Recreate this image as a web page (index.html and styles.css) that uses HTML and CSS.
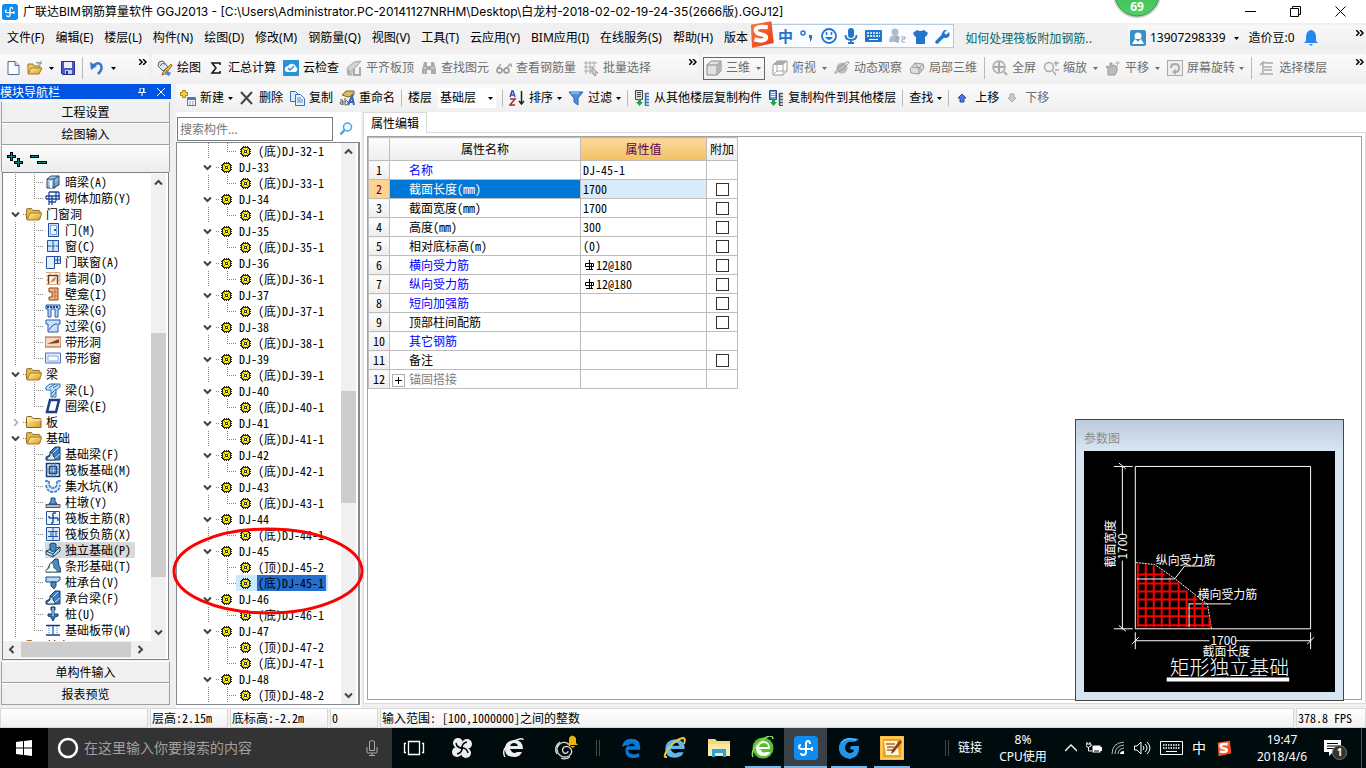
FILE: index.html
```html
<!DOCTYPE html>
<html lang="zh-CN">
<head>
<meta charset="utf-8">
<title>广联达BIM钢筋算量软件 GGJ2013</title>
<link rel="stylesheet" href="styles.css">
</head>
<body>
<svg class="defs" aria-hidden="true">
<defs>
<linearGradient id="gold" x1="0" y1="0" x2="1" y2="1"><stop offset="0" stop-color="#fff2b0"/><stop offset="1" stop-color="#d99a1c"/></linearGradient>
<linearGradient id="steel" x1="0" y1="0" x2="1" y2="1"><stop offset="0" stop-color="#e8f2fb"/><stop offset="1" stop-color="#4a86c0"/></linearGradient>
<linearGradient id="ball" x1="0" y1="0" x2="0" y2="1"><stop offset="0" stop-color="#35b14c"/><stop offset="1" stop-color="#4fd064"/></linearGradient>
<linearGradient id="sogou" x1="0" y1="0" x2="1" y2="1"><stop offset="0" stop-color="#fb7a45"/><stop offset="1" stop-color="#e93a12"/></linearGradient>
</defs>
<symbol id="logo" viewBox="0 0 24 24"><rect width="24" height="24" rx="4" fill="#0d8df2"/><path d="M16 8q0-3-2-3-2 0-2 3v8q0 3-3 3-2 0-2-2M7 9q-2 0-2 2t3 2h10M18 11v4" fill="none" stroke="#fff" stroke-width="2"/></symbol>
<symbol id="caret" viewBox="0 0 5 3"><path d="M0 0h5L2.500 3z" fill="currentColor"/></symbol>
<symbol id="more" viewBox="0 0 8 6"><path d="M0 0l3 3-3 3M4 0l3 3-3 3" fill="none" stroke="#000" stroke-width="1.500"/></symbol>
<symbol id="chev" viewBox="0 0 9 9"><path d="M1 2.500l3.500 3.500L8 2.500" fill="none" stroke="#444" stroke-width="2"/></symbol>
<symbol id="gear" viewBox="0 0 11 11"><path d="M3 0h1v1h1V0h1v1h1V0h1v1h1v1h1v1h1v1h-1v1h1v1h-1v1h1v1h-1v1H9v1H8v1H7v-1H6v1H5v-1H4v1H3v-1H2V9H1V8H0V7h1V6H0V5h1V4H0V3h1V2h1V1h1z" fill="#222"/><path d="M3 2h5v1h1v5H8v1H3V8H2V3h1z" fill="#f8f000"/><path d="M4 4h3v3H4z" fill="#333"/><path d="M5 5h1v1H5z" fill="#fff"/><path d="M3 3h1v1H3zM7 3h1v1H7zM3 7h1v1H3zM7 7h1v1H7z" fill="#8a8600"/></symbol>
<symbol id="folder" viewBox="0 0 16 14"><path d="M.5 12V2.500q0-1 1-1h4l1.500 2h6q1 0 1 1V12z" fill="#e9b94a" stroke="#9b7226"/><path d="M1 13L4 6h12l-3 7z" fill="url(#gold)" stroke="#a67a22"/></symbol>
<symbol id="folderc" viewBox="0 0 16 14"><path d="M.5 12.500v-10q0-1 1-1h4l1.500 2h7q1 0 1 1v8z" fill="url(#gold)" stroke="#8a6520"/><path d="M1 5h14" stroke="#fff4bd"/></symbol>
<!-- toolbar -->
<symbol id="new" viewBox="0 0 16 16"><path d="M3 1.500h7l4 4v9H3z" fill="#fbfdff" stroke="#4f6c94"/><path d="M10 1.500v4h4" fill="#cfe0f5" stroke="#4f6c94"/></symbol>
<symbol id="open" viewBox="0 0 16 16"><path d="M1 13V4h5l1 2h6v2" fill="#f1c95d" stroke="#9c7427"/><path d="M1 14l3-6h11l-3 6z" fill="url(#gold)" stroke="#a67a22"/><path d="M9 3q3-2 5 1m0-3v3h-3" fill="none" stroke="#597"/></symbol>
<symbol id="save" viewBox="0 0 16 16"><path d="M1.500 1.500h13v13h-12l-1-1z" fill="#4a58c8" stroke="#28348c"/><path d="M4 2h8v6H4z" fill="#e8eefc"/><path d="M5 10h7v4H5z" fill="#c9d0ea"/><path d="M6 11h2v3H6z" fill="#28348c"/></symbol>
<symbol id="undo" viewBox="0 0 16 16"><path d="M4 6q5-5 8-1 2 4-3 9" fill="none" stroke="#3f73c8" stroke-width="2.500"/><path d="M1 2l1 8 6-4z" fill="#3f73c8"/></symbol>
<symbol id="paint" viewBox="0 0 16 16"><path d="M2 2l4-1 5 6-5 4-5-5z" fill="#dbe8f4" stroke="#44617f"/><path d="M3 6q2-4 5-2" fill="none" stroke="#44617f"/><path d="M6 12l8-8 1 2-7 8-3 1z" fill="#f1b63c" stroke="#9b6c17"/><path d="M9 10l5 3-2 3-4-2z" fill="#4c8bd0"/></symbol>
<symbol id="cloud" viewBox="0 0 16 16"><rect width="16" height="16" rx="1" fill="#2692d8"/><path d="M4 12q-3-1-2-4 1-2 3-2 2-3 5-2 2 0 3 3 3 2 0 5z" fill="#fff"/><path d="M5 8l2 2 4-4" fill="none" stroke="#2692d8" stroke-width="1.500"/></symbol>
<symbol id="slab" viewBox="0 0 16 16"><path d="M1 8l7-6 7-1-5 6-4 3v5H2z" fill="#d2d2d2" stroke="#aaa"/><path d="M3 10v5M8 9v6h6V7" fill="none" stroke="#aaa" stroke-width="2"/></symbol>
<symbol id="binoc" viewBox="0 0 16 16"><path d="M3 2h3v4h4V2h3l2 8v4h-5v-4H6v4H1v-4z" fill="#aaa"/><path d="M3 8h2M10 8h3M3 12h1" stroke="#eee"/></symbol>
<symbol id="glasses" viewBox="0 0 16 16"><path d="M1 9l4-5M10 9l4-5q2 0 1 3M6 10h2" fill="none" stroke="#aaa" stroke-width="1.500"/><circle cx="3.500" cy="10.500" r="2.500" fill="#eee" stroke="#999" stroke-width="1.500"/><circle cx="10.500" cy="10.500" r="2.500" fill="#eee" stroke="#999" stroke-width="1.500"/></symbol>
<symbol id="batch" viewBox="0 0 16 16"><path d="M1 3h13M1 7h9M1 11h8M3 1v13M7 1v13M11 1v7" stroke="#aaa"/><path d="M9 7l6 6h-3l1 3-2-1-2-2z" fill="#ccc" stroke="#999"/></symbol>
<symbol id="cube" viewBox="0 0 16 16"><path d="M1 5l4-4h10v10l-4 4H1z" fill="#e2e2e2" stroke="#888"/><path d="M1 5h10v10M11 5l4-4" fill="none" stroke="#888"/><path d="M11 5l4-4v10l-4 4z" fill="#b4b4b4"/></symbol>
<symbol id="cubetop" viewBox="0 0 16 16"><path d="M1 5l4-4h10v10l-4 4H1z" fill="#fff" stroke="#999"/><path d="M1 5l4-4h10l-4 4z" fill="#aaa"/><path d="M11 5v10M5 5v6L1 15M5 11h10" fill="none" stroke="#aaa"/></symbol>
<symbol id="orbit" viewBox="0 0 16 16"><circle cx="8" cy="8" r="5.500" fill="#bbb"/><path d="M3 12q-3 3-2 0Q5 5 13 2q3-1 1 2-5 7-11 8" fill="none" stroke="#999"/></symbol>
<symbol id="local" viewBox="0 0 16 16"><path d="M1 9l5-6 8 1 1 4-5 6-8-1z" fill="#ddd" stroke="#999"/><path d="M3 7l8 1 2 3M6 3l4 6v5M10 8l4-4" fill="none" stroke="#999"/></symbol>
<symbol id="full" viewBox="0 0 16 16"><circle cx="7" cy="7" r="6" fill="#f1f1f1" stroke="#aaa" stroke-width="1.500"/><path d="M7 2v10M2 7h10M12 12l3 3" stroke="#aaa" stroke-width="2"/></symbol>
<symbol id="zoomi" viewBox="0 0 16 16"><circle cx="6" cy="7" r="4.500" fill="#f1f1f1" stroke="#aaa" stroke-width="1.500"/><path d="M10 11l3 4M11 3h5M13 1v5M12 10h4" stroke="#aaa" stroke-width="1.500"/></symbol>
<symbol id="hand" viewBox="0 0 16 16"><path d="M3 15V9L1 7l2-1 2 2V3h2v3l2-1 2 1 1 1v4l-2 4z" fill="#bbb" stroke="#999"/><path d="M10 3h5M12.500 1v5" stroke="#bbb"/></symbol>
<symbol id="rotate" viewBox="0 0 16 16"><rect x=".5" y=".5" width="15" height="15" fill="#eee" stroke="#aaa"/><path d="M4 8q0-4 4-4t4 4-4 4" fill="none" stroke="#aaa" stroke-width="2"/><path d="M9 9v6l-4-3z" fill="#aaa"/></symbol>
<symbol id="floors" viewBox="0 0 16 16"><path d="M1 5l3-3 3 1h7M4 3v10M5 7h8M5 10h8M1 14h13" fill="none" stroke="#aaa" stroke-width="1.500"/></symbol>
<symbol id="add" viewBox="0 0 16 16"><path d="M2.500.5h3v2h2v3h-2v2h-3v-2h-2v-3h2z" fill="#f5d348" stroke="#ab8211"/><path d="M7.500 7.500h8v8h-8z" fill="#fff" stroke="#4f79b4"/><path d="M7 9h9" stroke="#4f79b4" stroke-width="2"/><path d="M9 12h2M12 12h2M9 14h2M12 14h2" stroke="#7296c7"/></symbol>
<symbol id="del" viewBox="0 0 16 16"><path d="M2 2l11 12M13 2L2 14" stroke="#444" stroke-width="2"/></symbol>
<symbol id="copy" viewBox="0 0 16 16"><path d="M1.500 1.500h5l3 3v7h-8z" fill="#dcecff" stroke="#3b6fb7"/><path d="M6.500 4.500h5l4 4v7h-9z" fill="#e7f2ff" stroke="#3b6fb7"/><path d="M8 8h4M8 10h6M8 12h6" stroke="#4c8bd0"/></symbol>
<symbol id="rename" viewBox="0 0 16 16"><path d="M3 5l4-4h8v4l-6 2z" fill="#d9b963" stroke="#806623"/><path d="M1 10q3-1 3 1v4M4 12q-3-1-3 1t3 1M6 8v7q4 0 3-3t-3 0" fill="none" stroke="#555"/><path d="M9 15l4-9 2 9M10 12h5" fill="none" stroke="#3465c0" stroke-width="2"/></symbol>
<symbol id="sort" viewBox="0 0 16 16"><path d="M1 7l2-6h1l2 6M2 5h3" fill="none" stroke="#2d50a5" stroke-width="1.500"/><path d="M1 9h5l-5 6h5" fill="none" stroke="#a22b35" stroke-width="1.500"/><path d="M12.500 1v13M10 11l2.500 3 2.500-3" fill="none" stroke="#222" stroke-width="1.500"/></symbol>
<symbol id="filter" viewBox="0 0 16 16"><path d="M1 2h14l-5 6v7l-4-3V8z" fill="#4c8de4" stroke="#2862ad"/><path d="M3 3h8" stroke="#bbdafc"/></symbol>
<symbol id="from" viewBox="0 0 16 16"><path d="M1.500.5h7v9h-7z" fill="#ddd" stroke="#444"/><path d="M3 2.500h4M3 4.500h4M3 6.500h4" stroke="#444"/><path d="M4 9v3H2l3.500 4L9 12H7V9z" fill="#27a14a"/><path d="M11.500 3v12M11 3.500h4M11 6.500h4M11 9.500h4M11 12.500h4M11 15.500h4" stroke="#2e6fc4" stroke-width="1.500"/></symbol>
<symbol id="to" viewBox="0 0 16 16"><path d="M1.500.5h7v9h-7z" fill="#6d96d8" stroke="#234a91"/><path d="M3 2.500h4M3 4.500h4M3 6.500h4" stroke="#fff"/><path d="M4 9v3H2l3.500 4L9 12H7V9z" fill="#27a14a"/><path d="M11.500 3v12M11 3.500h4M11 6.500h4M11 9.500h4M11 12.500h4M11 15.500h4" stroke="#456" stroke-width="1.500"/></symbol>
<symbol id="up" viewBox="0 0 10 10"><path d="M5 1l4 4H7v4H3V5H1z" fill="#4b78e8" stroke="#2547a7"/></symbol>
<symbol id="down" viewBox="0 0 10 10"><path d="M5 9L1 5h2V1h4v4h2z" fill="#ccc" stroke="#aaa"/></symbol>
<!-- module tree -->
<symbol id="m-box" viewBox="0 0 16 16"><path d="M2 5l4-3h8v9l-4 2v1H2z" fill="url(#steel)" stroke="#2b4674"/><path d="M2 5h7v9M9 5l5-3" fill="none" stroke="#2b4674"/><path d="M5 7h2v7H5z" fill="#fff"/></symbol>
<symbol id="m-wire" viewBox="0 0 16 16"><path d="M1 6h14M1 9h14M1 6v3M4 2h10M4 2v13M14 2v7M7 6v9M11 2v9M4 12h7" fill="none" stroke="#1d49a0" stroke-width="1.300"/></symbol>
<symbol id="m-door" viewBox="0 0 16 16"><path d="M3.500 1.500h10v13h-10z" fill="#cfe2fa" stroke="#1d49a0"/><path d="M5.500 3.500h6v9h-6z" fill="#eef6ff" stroke="#7da5dd"/><circle cx="10" cy="8" r="1" fill="#123"/></symbol>
<symbol id="m-win" viewBox="0 0 16 16"><path d="M2.500 2.500h11v11h-11z" fill="#cfe4ff" stroke="#2451a3"/><path d="M8 2v12M2 8h12" stroke="#2451a3"/><path d="M6 8h1M10 8h1" stroke="#fff"/></symbol>
<symbol id="m-dw" viewBox="0 0 16 16"><path d="M1.500 2.500h8v12h-8z" fill="#e4efff" stroke="#2451a3"/><path d="M9.500 2.500h6v7h-6zM12.500 2v7M9 6h6" fill="#cfe4ff" stroke="#2451a3"/></symbol>
<symbol id="m-wall" viewBox="0 0 16 16"><path d="M1 2.500h14v12H1M1 6h14M1 10h14M5 2v12M11 2v12" fill="none" stroke="#e3a57c"/><path d="M3.500 14V5.500h9V14" fill="#fff" stroke="#6b3e1d" stroke-width="1.500"/><path d="M5 13l3-5 3-1-1 4z" fill="#d98b50"/></symbol>
<symbol id="m-niche" viewBox="0 0 16 16"><path d="M4 2h9v12H4v-3h3V6H4z" fill="#f0b685" stroke="#8d4717"/><path d="M10 2v12M7 6h5M7 10h5" stroke="#c47a48"/></symbol>
<symbol id="m-lb" viewBox="0 0 16 16"><path d="M1 3h14v4h-2v8h-3V7H6v8H3V7H1z" fill="#b9d5f6" stroke="#2458ac"/><path d="M2 5h12" stroke="#1b468f" stroke-width="2" stroke-dasharray="2 1"/></symbol>
<symbol id="m-gl" viewBox="0 0 16 16"><path d="M1 2h14v4h-2v8H3V6H1z" fill="#cde1fa" stroke="#2458ac"/><path d="M4 12l3-4 3-2h2" fill="none" stroke="#2458ac"/></symbol>
<symbol id="m-band" viewBox="0 0 16 16"><path d="M0 3h16v10H0z" fill="#f7d8bc" stroke="#a4552b"/><path d="M2 10l12-5v4z" fill="#8b421c"/></symbol>
<symbol id="m-bandw" viewBox="0 0 16 16"><path d="M.5 3h15v10H.5z" fill="#dceaff" stroke="#4d75c7"/><path d="M3 6h10v5H3z" fill="#fff" stroke="#8cace4"/></symbol>
<symbol id="m-beam" viewBox="0 0 16 16"><path d="M1 5l4-3h10v3l-4 3v7H6V8H1z" fill="#c7e5fa" stroke="#246cae"/><path d="M4 6l6-4M8 6l5-3M6 12l5-5M7 15l4-5" stroke="#246cae"/></symbol>
<symbol id="m-ring" viewBox="0 0 16 16"><path d="M5 2h9l-3 12H2z" fill="#fff" stroke="#193f89" stroke-width="2.500"/></symbol>
<symbol id="m-fb" viewBox="0 0 16 16"><path d="M1 14v-3l4-2V6l5-5h5v13z" fill="#3e7cb8" stroke="#17406d"/><path d="M2 14v-2l3-2V7h3v3l2 2v2z" fill="#dcecf9" stroke="#17406d"/><path d="M8 7l5-5M10 12l5-4" stroke="#cbe4f7"/></symbol>
<symbol id="m-raft" viewBox="0 0 16 16"><path d="M1.500 1.500h13v13h-13zM4.500 4.500h7v7h-7z" fill="#e4f0fb" stroke="#123c78" stroke-width="1.500"/><path d="M7 1v14M10 1v14M1 7h14M1 10h14" stroke="#3b6fae"/></symbol>
<symbol id="m-pit" viewBox="0 0 16 16"><path d="M1 2h3l1 6h6l1-6h3v6q-1 6-7 6t-7-6z" fill="#d7e8fa"/><path d="M0 3h4v4l2 3h4l2-3V3h4M1 7q1 7 7 7t7-7" fill="none" stroke="#3474ba" stroke-width="1.500" stroke-dasharray="3 1"/></symbol>
<symbol id="m-pier" viewBox="0 0 16 16"><path d="M1 10.500h14v3H1z" fill="#b5bcc6" stroke="#556"/><path d="M4 10l2-3V4h4v3l2 3z" fill="#5e98d2" stroke="#174b8e"/></symbol>
<symbol id="m-main" viewBox="0 0 16 16"><path d="M1.500 1.500h13v13h-13z" fill="#eef5ff" stroke="#2455a4"/><path d="M4 8h9M8 3v10M4 6v2M8 3h3M13 8v3M8 13H6" fill="none" stroke="#2455a4" stroke-width="1.500"/></symbol>
<symbol id="m-neg" viewBox="0 0 16 16"><path d="M1.500 1.500h13v13h-13z" fill="#d9e8fc" stroke="#2455a4"/><path d="M3 5.500h10M3 10.500h10M6 5v6M8 2v12M11 5v6" stroke="#2455a4"/></symbol>
<symbol id="m-iso" viewBox="0 0 16 16"><path d="M1 9l5-2 9-2v4l-7 6-7-3z" fill="#b9d9ee" stroke="#15456b"/><path d="M5 8V2l3-1 3 1v6L8 10z" fill="#4c8abb" stroke="#15456b"/><path d="M8 15v-3L1 9M8 12l7-7" fill="none" stroke="#15456b"/></symbol>
<symbol id="m-strip" viewBox="0 0 16 16"><path d="M5 6l5-5h3l1 7 2 3v3H1z" fill="#4b88bd" stroke="#163e66"/><path d="M1 14v-2l3-2 1-5h3l1 5 3 2v2z" fill="#fff" stroke="#476"/></symbol>
<symbol id="m-cap" viewBox="0 0 16 16"><path d="M1 3h14v3l-3 2H1z" fill="#bcd8f0" stroke="#174b80"/><path d="M6 8h5v4l-2 3-3-3z" fill="#4489c1" stroke="#174b80"/></symbol>
<symbol id="m-pile" viewBox="0 0 16 16"><path d="M6 1h4v3H9v4h4v2l-3 1-2 4-2-4-3-1V8h4V4H6z" fill="#2d77b8" stroke="#123e73"/><path d="M8 2v8" stroke="#d5eaff"/></symbol>
<symbol id="m-belt" viewBox="0 0 16 16"><path d="M1 3.500h14M1 13h14" stroke="#123c82" stroke-width="1.500"/><path d="M4 4v8M12 4v8" stroke="#3b73c9" stroke-dasharray="1 1"/><path d="M8 4v8" stroke="#3b73c9" stroke-width="1.500"/></symbol>
<!-- browser and tray -->
<symbol id="e" viewBox="0 0 24 24"><path fill-rule="evenodd" d="M2 11Q4 2 12 2q10 0 10 9v3H9q0 5 6 5 4 0 6-1.500v4Q18 23 14 23q-8 0-8-8 0-4 3-6-5 0-7 2zm7-1h7q0-3-3-3-3 0-4 3z" fill="currentColor"/></symbol>
<symbol id="ie" viewBox="0 0 24 24"><path d="M8 10q1-3 4-3t4 3zM8 13h13q0-9-9-9-9 1-9 9 0 8 9 8 6 0 8-5h-5q-4 3-7-3z" fill="currentColor"/></symbol>
<symbol id="ess" viewBox="0 0 24 24"><path d="M4 4l17-3 2 18-18 4z" fill="url(#sogou)"/><path d="M18 6q-9-1-10 2 0 3 5 4 5 1 3 4-3 2-9 0" fill="none" stroke="#fff" stroke-width="3.500"/></symbol>
</svg>

<header class="title">
  <svg class="i16"><use href="#logo"/></svg>
  <h1>广联达BIM钢筋算量软件 GGJ2013 - [C:\Users\Administrator.PC-20141127NRHM\Desktop\白龙村-2018-02-02-19-24-35(2666版).GGJ12]</h1>
  <div class="wctl">
    <button aria-label="最小化"><svg viewBox="0 0 11 11"><path d="M0 5.500h11"/></svg></button>
    <button aria-label="还原"><svg viewBox="0 0 11 11"><path d="M.5 2.500h8v8h-8zM2.500 2.500v-2h8v8h-2"/></svg></button>
    <button aria-label="关闭"><svg viewBox="0 0 11 11"><path d="M.5.5l10 10M10.500.5l-10 10"/></svg></button>
  </div>
</header>

<nav class="menu">
  <button>文件(F)</button><button>编辑(E)</button><button>楼层(L)</button><button>构件(N)</button><button>绘图(D)</button><button>修改(M)</button><button>钢筋量(Q)</button><button>视图(V)</button><button>工具(T)</button><button>云应用(Y)</button><button>BIM应用(I)</button><button>在线服务(S)</button><button>帮助(H)</button><button>版本</button>
  <div class="menu-right">
    <a class="tip" href="#">如何处理筏板附加钢筋..</a>
    <div class="account">
      <svg class="i16" viewBox="0 0 16 16"><rect width="16" height="16" rx="2" fill="#3b8fc9"/><circle cx="8" cy="6" r="3.500" fill="#fff"/><path d="M2 14l3-5 3 2 3-2 3 5z" fill="#fff"/><path d="M6 9h4l-2 3z" fill="#3b8fc9"/></svg>
      <button>13907298339 <svg class="caret"><use href="#caret"/></svg></button>
      <span>造价豆:0</span>
      <svg class="bell" viewBox="0 0 14 16"><path d="M7 0q5 1 5 7v4l2 2H0l2-2V7q0-6 5-7M5 14h4l-2 2z" fill="#2586ee"/></svg>
      <svg class="more"><use href="#more"/></svg>
    </div>
  </div>
</nav>

<div class="bar bar1">
  <div class="seg seg-file">
    <button aria-label="新建"><svg class="i16"><use href="#new"/></svg></button>
    <button aria-label="打开"><svg class="i16"><use href="#open"/></svg><svg class="caret"><use href="#caret"/></svg></button>
    <button aria-label="保存"><svg class="i16"><use href="#save"/></svg></button><i class="sep"></i>
    <button aria-label="撤销"><svg class="i16"><use href="#undo"/></svg><svg class="caret"><use href="#caret"/></svg></button>
    <svg class="more"><use href="#more"/></svg>
  </div>
  <div class="seg seg-draw">
    <button><svg class="i16"><use href="#paint"/></svg>绘图</button>
    <button><svg class="i12" viewBox="0 0 12 12"><path d="M10 3V1H2l4 5-4 5h8V9" fill="none" stroke="#111" stroke-width="1.500"/></svg>汇总计算</button>
    <button><svg class="i16"><use href="#cloud"/></svg>云检查</button>
    <button class="off"><svg class="i16"><use href="#slab"/></svg>平齐板顶</button>
    <button class="off"><svg class="i16"><use href="#binoc"/></svg>查找图元</button>
    <button class="off"><svg class="i16"><use href="#glasses"/></svg>查看钢筋量</button>
    <button class="off"><svg class="i16"><use href="#batch"/></svg>批量选择</button>
    <svg class="more"><use href="#more"/></svg>
  </div>
  <div class="seg seg-view">
    <button class="off framed"><svg class="i16"><use href="#cube"/></svg>三维 <svg class="caret"><use href="#caret"/></svg></button>
    <button class="off"><svg class="i16"><use href="#cubetop"/></svg>俯视 <svg class="caret"><use href="#caret"/></svg></button>
    <button class="off"><svg class="i16"><use href="#orbit"/></svg>动态观察</button>
    <button class="off"><svg class="i16"><use href="#local"/></svg>局部三维</button><i class="sep"></i>
    <button class="off"><svg class="i16"><use href="#full"/></svg>全屏</button>
    <button class="off"><svg class="i16"><use href="#zoomi"/></svg>缩放 <svg class="caret"><use href="#caret"/></svg></button>
    <button class="off"><svg class="i16"><use href="#hand"/></svg>平移 <svg class="caret"><use href="#caret"/></svg></button>
    <button class="off tight"><svg class="i16"><use href="#rotate"/></svg>屏幕旋转<svg class="caret"><use href="#caret"/></svg></button><i class="sep"></i>
    <button class="off"><svg class="i16"><use href="#floors"/></svg>选择楼层</button>
    <svg class="more"><use href="#more"/></svg>
  </div>
</div>

<main>
  <aside class="dock">
    <div class="dock-head"><h2>模块导航栏</h2>
      <button aria-label="固定"><svg viewBox="0 0 8 8"><path d="M2 0h4v4M2 0v4M0 4.500h8M4 5v3M5.500 0v4"/></svg></button>
      <button aria-label="关闭"><svg viewBox="0 0 8 8"><path d="M0 0l8 8M8 0L0 8"/></svg></button></div>
    <button class="sect">工程设置</button>
    <button class="sect">绘图输入</button>
    <div class="strip">
      <button aria-label="全部展开"><svg width="17" height="17" viewBox="0 0 17 17"><path d="M4.500 1v9M0 5.500h9M11.500 7v9M7 11.500h9" stroke="#000" stroke-width="3"/><path d="M4.500 2v7M1 5.500h7M11.500 8v7M8 11.500h7" stroke="#008c86"/></svg></button>
      <button aria-label="全部折叠"><svg width="17" height="17" viewBox="0 0 17 17"><path d="M0 5.500h9M7 11.500h10" stroke="#000" stroke-width="3"/><path d="M1 5.500h7M8 11.500h8" stroke="#008c86"/></svg></button>
    </div>
    <div class="mod">
      <div class="mod-view">
        <ul class="tree" role="tree">
          <li class="c"><svg><use href="#m-box"/></svg>暗梁(A)</li>
          <li class="c last"><svg><use href="#m-wire"/></svg>砌体加筋(Y)</li>
          <li class="p"><svg class="ch"><use href="#chev"/></svg><svg><use href="#folder"/></svg>门窗洞</li>
          <li class="c"><svg><use href="#m-door"/></svg>门(M)</li>
          <li class="c"><svg><use href="#m-win"/></svg>窗(C)</li>
          <li class="c"><svg><use href="#m-dw"/></svg>门联窗(A)</li>
          <li class="c"><svg><use href="#m-wall"/></svg>墙洞(D)</li>
          <li class="c"><svg><use href="#m-niche"/></svg>壁龛(I)</li>
          <li class="c"><svg><use href="#m-lb"/></svg>连梁(G)</li>
          <li class="c"><svg><use href="#m-gl"/></svg>过梁(G)</li>
          <li class="c"><svg><use href="#m-band"/></svg>带形洞</li>
          <li class="c last"><svg><use href="#m-bandw"/></svg>带形窗</li>
          <li class="p"><svg class="ch"><use href="#chev"/></svg><svg><use href="#folder"/></svg>梁</li>
          <li class="c"><svg><use href="#m-beam"/></svg>梁(L)</li>
          <li class="c last"><svg><use href="#m-ring"/></svg>圈梁(E)</li>
          <li class="p"><svg class="ch" viewBox="0 0 9 9"><path d="M3 1l3.500 3.500L3 8" fill="none" stroke="#aaa" stroke-width="1.500"/></svg><svg><use href="#folderc"/></svg>板</li>
          <li class="p"><svg class="ch"><use href="#chev"/></svg><svg><use href="#folder"/></svg>基础</li>
          <li class="c"><svg><use href="#m-fb"/></svg>基础梁(F)</li>
          <li class="c"><svg><use href="#m-raft"/></svg>筏板基础(M)</li>
          <li class="c"><svg><use href="#m-pit"/></svg>集水坑(K)</li>
          <li class="c"><svg><use href="#m-pier"/></svg>柱墩(Y)</li>
          <li class="c"><svg><use href="#m-main"/></svg>筏板主筋(R)</li>
          <li class="c"><svg><use href="#m-neg"/></svg>筏板负筋(X)</li>
          <li class="c"><span class="cur"><svg><use href="#m-iso"/></svg>独立基础(P)</span></li>
          <li class="c"><svg><use href="#m-strip"/></svg>条形基础(T)</li>
          <li class="c"><svg><use href="#m-cap"/></svg>桩承台(V)</li>
          <li class="c"><svg><use href="#m-fb"/></svg>承台梁(F)</li>
          <li class="c"><svg><use href="#m-pile"/></svg>桩(U)</li>
          <li class="c last"><svg><use href="#m-belt"/></svg>基础板带(W)</li>
          <li class="p"><svg class="ch"><use href="#chev"/></svg><svg><use href="#folder"/></svg>其它</li>
        </ul>
        <div class="vs"><svg class="ar flip"><use href="#chev"/></svg><div class="track t1"><i></i></div><svg class="ar"><use href="#chev"/></svg></div>
      </div>
      <div class="hs"><svg class="ar left"><use href="#chev"/></svg><i></i><svg class="ar right"><use href="#chev"/></svg></div>
    </div>
    <button class="sect">单构件输入</button>
    <button class="sect">报表预览</button>
  </aside>

  <div class="work">
    <div class="bar bar2">
      <button class="tight"><svg class="i16"><use href="#add"/></svg>新建<svg class="caret"><use href="#caret"/></svg></button>
      <button><svg class="i16"><use href="#del"/></svg>删除</button>
      <button><svg class="i16"><use href="#copy"/></svg>复制</button>
      <button><svg class="i16"><use href="#rename"/></svg>重命名</button><i class="sep"></i>
      <label for="floor">楼层</label>
      <span class="combo"><select id="floor"><option>基础层</option></select><svg class="caret"><use href="#caret"/></svg></span><i class="sep"></i>
      <button class="tight"><svg class="i16"><use href="#sort"/></svg>排序<svg class="caret"><use href="#caret"/></svg></button>
      <button class="tight"><svg class="i16"><use href="#filter"/></svg>过滤<svg class="caret"><use href="#caret"/></svg></button><i class="sep"></i>
      <button><svg class="i16"><use href="#from"/></svg>从其他楼层复制构件</button>
      <button><svg class="i16"><use href="#to"/></svg>复制构件到其他楼层</button><i class="sep"></i>
      <button class="tight">查找<svg class="caret"><use href="#caret"/></svg></button><i class="sep"></i>
      <button class="mv"><svg class="i10"><use href="#up"/></svg>上移</button>
      <button class="mv off"><svg class="i10"><use href="#down"/></svg>下移</button>
    </div>
    <div class="cols">
      <section class="comp">
        <div class="find"><input type="text" placeholder="搜索构件..." aria-label="搜索构件"><button aria-label="搜索"><svg width="14" height="14" viewBox="0 0 14 14"><circle cx="8.500" cy="5" r="4" fill="#eef8ff" stroke="#4aa3dc" stroke-width="1.500"/><path d="M5.500 8L1.500 12.500" stroke="#4aa3dc" stroke-width="2.500"/></svg></button></div>
        <div class="comp-view">
          <ul class="tree two" role="tree">
            <li class="c last"><svg><use href="#gear"/></svg><span>(底)DJ-32-1</span></li>
            <li class="p"><svg class="ch"><use href="#chev"/></svg><svg><use href="#gear"/></svg>DJ-33</li><li class="c last"><svg><use href="#gear"/></svg><span>(底)DJ-33-1</span></li>
            <li class="p"><svg class="ch"><use href="#chev"/></svg><svg><use href="#gear"/></svg>DJ-34</li><li class="c last"><svg><use href="#gear"/></svg><span>(底)DJ-34-1</span></li>
            <li class="p"><svg class="ch"><use href="#chev"/></svg><svg><use href="#gear"/></svg>DJ-35</li><li class="c last"><svg><use href="#gear"/></svg><span>(底)DJ-35-1</span></li>
            <li class="p"><svg class="ch"><use href="#chev"/></svg><svg><use href="#gear"/></svg>DJ-36</li><li class="c last"><svg><use href="#gear"/></svg><span>(底)DJ-36-1</span></li>
            <li class="p"><svg class="ch"><use href="#chev"/></svg><svg><use href="#gear"/></svg>DJ-37</li><li class="c last"><svg><use href="#gear"/></svg><span>(底)DJ-37-1</span></li>
            <li class="p"><svg class="ch"><use href="#chev"/></svg><svg><use href="#gear"/></svg>DJ-38</li><li class="c last"><svg><use href="#gear"/></svg><span>(底)DJ-38-1</span></li>
            <li class="p"><svg class="ch"><use href="#chev"/></svg><svg><use href="#gear"/></svg>DJ-39</li><li class="c last"><svg><use href="#gear"/></svg><span>(底)DJ-39-1</span></li>
            <li class="p"><svg class="ch"><use href="#chev"/></svg><svg><use href="#gear"/></svg>DJ-40</li><li class="c last"><svg><use href="#gear"/></svg><span>(底)DJ-40-1</span></li>
            <li class="p"><svg class="ch"><use href="#chev"/></svg><svg><use href="#gear"/></svg>DJ-41</li><li class="c last"><svg><use href="#gear"/></svg><span>(底)DJ-41-1</span></li>
            <li class="p"><svg class="ch"><use href="#chev"/></svg><svg><use href="#gear"/></svg>DJ-42</li><li class="c last"><svg><use href="#gear"/></svg><span>(底)DJ-42-1</span></li>
            <li class="p"><svg class="ch"><use href="#chev"/></svg><svg><use href="#gear"/></svg>DJ-43</li><li class="c last"><svg><use href="#gear"/></svg><span>(底)DJ-43-1</span></li>
            <li class="p"><svg class="ch"><use href="#chev"/></svg><svg><use href="#gear"/></svg>DJ-44</li><li class="c last"><svg><use href="#gear"/></svg><span>(底)DJ-44-1</span></li>
            <li class="p"><svg class="ch"><use href="#chev"/></svg><svg><use href="#gear"/></svg>DJ-45</li><li class="c"><svg><use href="#gear"/></svg><span>(顶)DJ-45-2</span></li><li class="c last"><span class="sel"><svg><use href="#gear"/></svg><span>(底)DJ-45-1</span></span></li>
            <li class="p"><svg class="ch"><use href="#chev"/></svg><svg><use href="#gear"/></svg>DJ-46</li><li class="c last"><svg><use href="#gear"/></svg><span>(底)DJ-46-1</span></li>
            <li class="p"><svg class="ch"><use href="#chev"/></svg><svg><use href="#gear"/></svg>DJ-47</li><li class="c"><svg><use href="#gear"/></svg><span>(顶)DJ-47-2</span></li><li class="c last"><svg><use href="#gear"/></svg><span>(底)DJ-47-1</span></li>
            <li class="p"><svg class="ch"><use href="#chev"/></svg><svg><use href="#gear"/></svg>DJ-48</li><li class="c"><svg><use href="#gear"/></svg><span>(顶)DJ-48-2</span></li>
          </ul>
          <div class="vs"><svg class="ar flip"><use href="#chev"/></svg><div class="track t2"><i></i></div><svg class="ar"><use href="#chev"/></svg></div>
        </div>
        <svg class="mark" viewBox="0 0 192 88"><ellipse cx="96" cy="44" rx="94" ry="42" fill="none" stroke="#f00" stroke-width="3"/></svg>
      </section>

      <section class="props">
        <div class="tabs"><button class="tab">属性编辑</button><i></i></div>
        <div class="grid-wrap"><div class="grid-box">
          <table>
            <colgroup><col class="k0"><col class="k1"><col class="k2"><col class="k3"></colgroup>
            <thead><tr><th></th><th>属性名称</th><th class="hot">属性值</th><th>附加</th></tr></thead>
            <tbody>
              <tr><th>1</th><td class="b">名称</td><td>DJ-45-1</td><td></td></tr>
              <tr class="on"><th>2</th><td>截面长度(mm)</td><td>1700</td><td><input type="checkbox" aria-label="附加 截面长度"></td></tr>
              <tr><th>3</th><td>截面宽度(mm)</td><td>1700</td><td><input type="checkbox" aria-label="附加 截面宽度"></td></tr>
              <tr><th>4</th><td>高度(mm)</td><td>300</td><td><input type="checkbox" aria-label="附加 高度"></td></tr>
              <tr><th>5</th><td>相对底标高(m)</td><td>(0)</td><td><input type="checkbox" aria-label="附加 相对底标高"></td></tr>
              <tr><th>6</th><td class="b">横向受力筋</td><td><svg class="phi" viewBox="0 0 13 10"><path d="M6.500 0v10M2.500 3.500h8v3h-8zM3 9.500h7M8.500 3v6" fill="none" stroke="#000"/></svg>12@180</td><td><input type="checkbox" aria-label="附加 横向受力筋"></td></tr>
              <tr><th>7</th><td class="b">纵向受力筋</td><td><svg class="phi" viewBox="0 0 13 10"><path d="M6.500 0v10M2.500 3.500h8v3h-8zM3 9.500h7M8.500 3v6" fill="none" stroke="#000"/></svg>12@180</td><td><input type="checkbox" aria-label="附加 纵向受力筋"></td></tr>
              <tr><th>8</th><td class="b">短向加强筋</td><td></td><td><input type="checkbox" aria-label="附加 短向加强筋"></td></tr>
              <tr><th>9</th><td>顶部柱间配筋</td><td></td><td><input type="checkbox" aria-label="附加 顶部柱间配筋"></td></tr>
              <tr><th>10</th><td class="b">其它钢筋</td><td></td><td></td></tr>
              <tr><th>11</th><td>备注</td><td></td><td><input type="checkbox" aria-label="附加 备注"></td></tr>
              <tr><th>12</th><td class="g"><button class="plus" aria-label="展开"><svg width="7" height="7" viewBox="0 0 7 7"><path d="M0 3.500h7M3.500 0v7" stroke="#000"/></svg></button>锚固搭接</td><td></td><td></td></tr>
            </tbody>
          </table>
        </div></div>
      </section>
    </div>
    <section class="param">
      <h3>参数图</h3>
      <svg class="cad" viewBox="0 0 252 242">
        <g fill="none" stroke="#fff">
          <path d="M51.500 15.500h176v163h-176zM30 15.500h19M30 178.500h19M38.500 15v69M38.500 110v69M35 12l7 6M35 175l7 6M51.500 182v17M227.500 182v17M51 190.500h75M152 190.500h76M48 194l7-7M224 194l7-7"/>
          <path d="M52 112l19 2 20 14 33 26 4 25" stroke-dasharray="2 1"/>
          <path d="M91 128.500l10-13h20M105.500 153.500h42"/>
        </g>
        <path class="bars" d="M54 113v64M62 114v63M70 115v62M78 120v57M86 127v50M95 133v44M103 140v37M111 145v32M119 151v26M126 168v9M54 124h27M54 133h42M54 141h49M54 149h60M54 158h70M54 166h71M54 175h74"/>
        <path d="M53 128.500h38M105.500 177v-24" stroke="#fff"/>
        <g class="cad-t">
          <text x="72" y="114">纵向受力筋</text><text x="114" y="149">横向受力筋</text>
          <text x="127" y="195">1700</text><text x="119" y="206">截面长度</text>
          <text transform="translate(31 117) rotate(-90)">截面宽度</text><text transform="translate(43 109) rotate(-90)">1700</text>
          <text class="big" x="86" y="225">矩形独立基础</text>
        </g>
        <path d="M83 229.500h123" stroke="#fff" stroke-width="4"/>
      </svg>
    </section>
  </div>
</main>

<footer class="status"><span class="s1"></span><span class="s2">层高:2.15m</span><span class="s3">底标高:-2.2m</span><span class="s4">0</span><span class="s5">输入范围: [100,1000000]之间的整数</span><span class="s6">378.8 FPS</span></footer>

<div class="task">
  <button class="start" aria-label="开始"><svg width="16" height="16" viewBox="0 0 16 16"><path d="M0 2l7-1v6.500H0zM8 1l8-1v7.500H8zM0 8.500h7V15l-7-1zM8 8.500h8V16l-8-1z" fill="#fff"/></svg></button>
  <div class="cortana">
    <svg width="22" height="22" viewBox="0 0 22 22"><circle cx="11" cy="11" r="9" fill="none" stroke="#fff" stroke-width="2.500"/></svg>
    <input type="text" placeholder="在这里输入你要搜索的内容" aria-label="搜索">
    <svg width="12" height="16" viewBox="0 0 12 16"><path d="M3.500 1.500q2.500-2 5 0v9h-5zM1 7v5q0 1 1 1h8q1 0 1-1V7M6 13v2.500M3 15.500h6" fill="none" stroke="#aaa"/></svg>
  </div>
  <div class="apps">
    <button aria-label="任务视图"><svg width="22" height="16" viewBox="0 0 22 16"><path d="M5.500 1.500h11v13h-11zM3 3.500H1.500v9H3M19 3.500h1.500v9H19" fill="none" stroke="#fff" stroke-width="1.300"/></svg></button>
    <button class="w52" aria-label="四叶"><svg width="24" height="24" viewBox="0 0 24 24"><g fill="#eee"><circle cx="8" cy="7" r="5"/><circle cx="17" cy="8" r="5"/><circle cx="7" cy="16" r="5"/><circle cx="16" cy="17" r="5"/></g><path d="M12 12Q7 12 6 7M12 12q0-5 5-6M12 12q5 0 6 5M12 12q0 5-5 6" fill="none" stroke="#020b10" stroke-width="1.500"/></svg></button>
    <button class="w52 white" aria-label="浏览器"><svg width="24" height="24"><use href="#ie"/></svg><svg class="over" viewBox="0 0 24 24"><path d="M3 21Q-2 12 12 5q9-4 9-1" fill="none" stroke="#eee" stroke-width="1.500"/></svg></button>
    <button class="w52" aria-label="消息"><svg width="28" height="28" viewBox="0 0 28 28"><path d="M18 12q-3-5-9-3-6 4-3 10 4 6 11 3 4-3 2-7-3-4-7-2-3 3 0 6 4 1 4-2M5 20Q1 13 8 8M18 23q-5 3-9 1" fill="none" stroke="#ddd" stroke-width="1.300"/><path d="M15 11l2-2V4q3-5 7 0v5l2 2zM18 12h5l-2 2z" fill="#e9b10d"/></svg></button>
    <i class="grip"></i>
    <button class="edge" aria-label="Edge"><svg width="22" height="22"><use href="#e"/></svg></button>
    <button class="iex" aria-label="Internet Explorer"><svg width="26" height="26"><use href="#ie"/></svg><svg class="over" viewBox="0 0 24 24"><path d="M4 21Q-1 22 5 13 13 3 20 2q3 0 1 6" fill="none" stroke="#f2c53d" stroke-width="2"/></svg></button>
    <button aria-label="文件资源管理器"><svg width="22" height="20" viewBox="0 0 22 20"><path d="M0 1h7l2 2h13v15H0z" fill="#f7d977"/><path d="M0 6h22v12H0z" fill="#ffe9a0"/><path d="M4 11h14v8h-3v-4H7v4H4z" fill="#2da3dc"/></svg></button>
    <button class="run" aria-label="360浏览器"><svg width="24" height="24" viewBox="0 0 24 24"><circle cx="12" cy="12" r="10.500" fill="#5cbd35"/><path d="M8 11q1-4 5-4t4 4zM7 13h12q0-8-7-8-7 0-7 7 0 8 8 8 5 0 6-4h-4q-4 2-5-2z" fill="#fff"/><path d="M2 21Q-1 14 10 5t12-2" fill="none" stroke="#8de05c" stroke-width="1.500"/></svg></button>
    <button class="run act" aria-label="广联达"><svg width="24" height="24"><use href="#logo"/></svg></button>
    <button class="run" aria-label="G"><svg width="24" height="24" viewBox="0 0 24 24"><path d="M22 3q-3 3-6 3-7-1-8 5 0 6 6 6 3-1 3-3l-4-1 1-3h8q1 11-9 13-9-1-11-9Q1 4 11 2q6 0 11 1" fill="#2196e8"/><path d="M4 7Q9 0 19 4" fill="none" stroke="#6ed0ff"/></svg></button>
    <button class="run" aria-label="记事本"><svg width="24" height="24" viewBox="0 0 24 24"><rect width="24" height="24" fill="#f6a21a"/><rect x="1.500" y="1.500" width="21" height="21" fill="none" stroke="#ffd36b" stroke-width="2"/><path d="M4 5h13l2 14H6z" fill="#fff6df"/><path d="M6 8h9M7 11h7M7 14h6" stroke="#a76b2c" stroke-width="1.500"/><path d="M20 4l2 2-8 10-3 2 1-4z" fill="#88421b"/></svg></button>
  </div>
  <div class="tray">
    <i class="grip"></i><span class="links">链接</span>
    <span class="two-l">8%<br>CPU使用</span>
    <svg width="12" height="8" viewBox="0 0 12 8"><path d="M0 7l6-6 6 6" fill="none" stroke="#fff" stroke-width="1.300"/></svg>
    <svg width="16" height="12" viewBox="0 0 16 12"><path d="M0 2h5M1 0v2M4 0v2M0 2v2q2 3 5 0V2M2.500 5v4H6" fill="none" stroke="#fff"/><path d="M6.500 3.500h8v7h-8z" fill="#fff"/><path d="M14 5h2v4h-2z" fill="#fff"/><path d="M8 9h5" stroke="#000"/></svg>
    <svg width="14" height="14" viewBox="0 0 14 14"><path d="M1 13Q1 2 13 1M4 13q0-8 9-9M7 13q0-5 6-6" fill="none" stroke="#bbb"/><path d="M9 13q0-3 4-3v3z" fill="#fff"/></svg>
    <svg width="17" height="14" viewBox="0 0 17 14"><path d="M.5 5H3l4-4v12L3 9H.5zM9 5q2 2 0 4M11 3q4 4 0 8M13 1q6 6 0 12" fill="none" stroke="#fff"/></svg>
    <svg width="23" height="14" viewBox="0 0 23 14"><path d="M.5.500h22v13H.5z" fill="none" stroke="#fff"/><path d="M3 4h17M3 7h17" stroke="#fff" stroke-width="1.500" stroke-dasharray="1.500 1"/><path d="M6 10.500h11" stroke="#fff"/></svg>
    <span class="zh">中</span>
    <svg width="17" height="17"><use href="#ess"/></svg>
    <span class="two-l clock">19:47<br>2018/4/6</span>
    <span class="note"><svg width="18" height="16" viewBox="0 0 18 16"><path d="M0 0h17v12H9l-4 4v-4H0z" fill="#fff"/><path d="M3 3.500h11M3 6h11M3 8.500h11" stroke="#000"/></svg><b>1</b></span>
    <i class="desk"></i>
  </div>
</div>

<div class="ball"><svg viewBox="0 0 50 50"><circle cx="25" cy="25" r="24" fill="#ccc"/><circle cx="25" cy="25" r="22" fill="url(#ball)" stroke="#2c9a40"/></svg><span>69</span></div>
<div class="ime">
  <svg class="ime-s"><use href="#ess"/></svg><b>中</b>
  <svg width="14" height="12" viewBox="0 0 14 12"><circle cx="3" cy="3" r="2" fill="none" stroke="#2175cb" stroke-width="1.500"/><path d="M9 5h3v4l-2 3V8H9z" fill="#2175cb"/></svg>
  <svg width="16" height="16" viewBox="0 0 16 16"><circle cx="8" cy="8" r="7" fill="none" stroke="#2175cb" stroke-width="1.800"/><path d="M4 9q4 6 8 0z" fill="#2175cb"/><path d="M5.500 4v3M10.500 4v3" stroke="#2175cb" stroke-width="1.500"/></svg>
  <svg width="14" height="16" viewBox="0 0 14 16"><rect x="4" width="6" height="10" rx="3" fill="#2175cb"/><path d="M1.500 7q0 5 5.500 5t5.500-5M7 12v4M4 15h6" fill="none" stroke="#2175cb" stroke-width="1.800"/></svg>
  <svg width="17" height="12" viewBox="0 0 17 12"><rect width="17" height="12" rx="1" fill="#2175cb"/><path d="M2 3h13M2 6h13" stroke="#fff" stroke-width="1.500" stroke-dasharray="2 1"/><path d="M4 9.500h9" stroke="#fff"/></svg>
  <svg width="17" height="16" viewBox="0 0 17 16"><circle cx="6" cy="4" r="3.500" fill="#aebccb"/><path d="M0 14q0-7 6-7 4 0 4 3v4z" fill="#aebccb"/><path d="M6 9h4v2H7v3h3M12 9h4v2h-3v3h3" fill="none" stroke="#93a5b8"/></svg>
  <svg width="15" height="15" viewBox="0 0 15 15"><path d="M4 1q3 2 7 0l4 3-2 4-1-1v8H3V7L2 8 0 4z" fill="#2175cb"/></svg>
  <svg width="15" height="15" viewBox="0 0 15 15"><path d="M2 13l7-7" stroke="#2175cb" stroke-width="3.500" stroke-linecap="round"/><path d="M12 1L9 4l2 2 3-3q2 5-3 6-5 0-4-5 2-4 5-3" fill="#2175cb"/></svg>
</div>
</body>
</html>
```
FILE: styles.css
```css
* { box-sizing: border-box; }
body {
  margin: 0; height: 100vh; overflow: hidden; position: relative;
  display: flex; flex-direction: column;
  background: #f0f0f0; color: #000;
  font: 12px/16px "Noto Sans", "Noto Sans CJK SC", sans-serif;
}
button, input, select { font: inherit; color: inherit; border: 0; background: none; padding: 0; margin: 0; }
button { display: inline-flex; align-items: center; white-space: nowrap; }
h1, h2, h3, ul { margin: 0; padding: 0; font: inherit; }
svg { flex: none; display: block; }
.defs { position: absolute; width: 0; height: 0; }
.i16 { width: 16px; height: 16px; }
.i12 { width: 12px; height: 12px; }
.i10 { width: 10px; height: 10px; }
.caret { width: 5px; height: 3px; }
.more { width: 8px; height: 6px; margin-left: auto; }

.title { height: 23px; flex: none; background: #fff; display: flex; align-items: center; gap: 5px; padding-left: 2px; white-space: nowrap; }
.title h1 { font-family: Inter, "Noto Sans CJK SC", sans-serif; }
.wctl { margin-left: auto; display: flex; align-items: center; gap: 34px; padding-right: 20px; }
.wctl svg { width: 11px; height: 11px; fill: none; stroke: #000; }

.menu { height: 30px; flex: none; display: flex; align-items: center; gap: 11px; padding-left: 7px; white-space: nowrap; }
.menu-right { margin-left: auto; display: flex; align-self: stretch; align-items: center; }
.tip { color: #046a6a; text-decoration: none; padding-right: 36px; font: 12px/16px "Noto Sans CJK SC", sans-serif; }
.account { display: flex; align-items: center; gap: 4px; height: 26px; width: 238px; padding: 0 2px 0 2px; background: linear-gradient(#f8f8f8, #efefef); }
.account button { gap: 8px; margin-right: 6px; }
.bell { width: 14px; height: 16px; margin-left: 5px; }
.account .more { align-self: flex-start; margin-top: 5px; }

.bar { flex: none; display: flex; align-items: center; white-space: nowrap; }
.bar button { gap: 4px; }
.bar button .caret { margin-left: 2px; }
.bar .off { color: #6d6d6d; }
.sep { width: 1px; height: 22px; background: #b9b9b9; flex: none; }
.bar1 { height: 28px; margin: 1px 0 2px; gap: 3px; }
.seg { display: flex; align-items: center; gap: 7px; height: 28px; background: linear-gradient(#fbfbfb, #f0f0f0); border-radius: 3px; }
.seg-file { width: 149px; padding: 0 2px 0 5px; gap: 6px; }
.seg-file .more, .seg-draw .more, .seg-view .more { align-self: flex-start; margin-top: 5px; }
.seg-draw { width: 547px; padding: 0 2px 0 5px; }
.seg-draw .i12 { margin: 0 2px; }
.seg-view { flex: 1; padding: 0 2px 0 1px; gap: 7px; }
.framed { border: 1px solid #666; height: 23px; padding: 0 3px 0 2px; }
.bar button.tight .caret { margin-left: 0; }

main { flex: 1; min-height: 0; display: flex; }
.dock { width: 172px; flex: none; display: flex; flex-direction: column; padding-bottom: 3px; font-family: "Noto Sans CJK SC", sans-serif; }
.dock-head { height: 15px; margin: 0 1px 2px 0; background: #0054e3; color: #fff; display: flex; align-items: center; gap: 11px; padding-right: 6px; }
.dock-head h2 { flex: 1; }
.dock-head svg { width: 8px; height: 8px; fill: none; stroke: #fff; }
.sect { height: 22px; flex: none; margin: 0 2px 0 1px; justify-content: center; border: 1px solid #a0a0a0; border-top-color: #fff; background: #f0f0f0; }
.strip { height: 27px; flex: none; margin: 0 2px 0 1px; border: 1px solid #a0a0a0; border-bottom: 0; border-top-color: #fff; background: linear-gradient(#fcfcfc, #ececec); display: flex; align-items: center; gap: 6px; padding-left: 5px; }
.mod { flex: 1; min-height: 0; margin: 0 3px 1px 2px; border: 1px solid #7a828c; background: #fff; display: flex; flex-direction: column; padding: 1px 2px 1px 0; }
.mod-view, .comp-view { flex: 1; min-height: 0; display: flex; }
.vs { width: 15px; flex: none; background: #f0f0f0; display: flex; flex-direction: column; align-items: center; padding: 4px 0; }
.ar { width: 9px; height: 9px; }
.flip { transform: rotate(180deg); }
.left { transform: rotate(90deg); }
.right { transform: rotate(-90deg); }
.track { flex: 1; align-self: stretch; display: flex; flex-direction: column; }
.track::before, .track::after { content: ""; }
.track i { background: #cdcdcd; }
.t1::before { flex: 145; } .t1 i { flex: 241; } .t1::after { flex: 51; }
.t2::before { flex: 233; } .t2 i { flex: 111; } .t2::after { flex: 186; }
.hs { height: 17px; flex: none; background: #f0f0f0; display: flex; align-items: center; padding: 0 4px; gap: 5px; }
.hs i { width: 110px; height: 15px; background: #cdcdcd; }
.tree { flex: 1; min-width: 0; overflow: hidden; list-style: none; font: 12px/16px "Noto Sans Mono CJK SC", "Noto Sans CJK SC", monospace; --v: repeating-linear-gradient(#888 0 1px, transparent 1px 2px); --h: repeating-linear-gradient(90deg, #888 0 1px, transparent 1px 2px); }
.tree li { height: 16px; display: flex; align-items: center; white-space: nowrap; background-repeat: no-repeat; }
.tree li svg { width: 16px; height: 16px; margin-right: 4px; }
.tree li .ch { width: 9px; height: 9px; margin-right: 6px; }
.tree .p { padding-left: 8px; background-image: var(--h); background-position: 20px 8px; background-size: 4px 1px; }
.tree .c { padding-left: 42px; background-image: var(--v), var(--v), var(--h); background-position: 12px 0, 31px 0, 31px 8px; background-size: 1px 100%, 1px 100%, 10px 1px; }
.tree .last { background-size: 1px 100%, 1px 8px, 10px 1px; }
.cur { display: flex; align-items: center; background: #d9d9d9; padding-right: 4px; height: 16px; }

.work { flex: 1; min-width: 0; display: flex; flex-direction: column; position: relative; }
.bar2 { height: 28px; margin-left: 4px; padding-left: 4px; gap: 6px; background: linear-gradient(#fbfbfb, #efefef); }
.bar2 .sep { height: 16px; }
.combo { display: flex; align-items: center; background: #fff; width: 58px; height: 20px; padding-left: 2px; }
.combo select { appearance: none; flex: 1; }
.combo .caret { margin-right: 3px; }
.mv .i10 { margin: 0 4px 0 2px; }
.cols { flex: 1; min-height: 0; display: flex; gap: 2px; }
.comp { width: 185px; margin-left: 4px; flex: none; display: flex; flex-direction: column; position: relative; padding-bottom: 3px; background: #fff; }
.find { display: flex; align-items: center; padding: 5px 8px 1px 1px; gap: 6px; }
.find input { flex: 1; min-width: 0; height: 24px; border: 1px solid #7a7a7a; background: #fff; padding: 0 2px; }
.find input::placeholder { color: #767676; opacity: 1; }
.comp-view { border: 1px solid #828790; border-right-width: 2px; padding: 0 2px 0 0; margin-right: 1px; background: #fff; }
.two .p { padding-left: 26px; background-position: 39px 8px; }
.two .c { padding-left: 63px; background-position: 31px 0, 50px 0, 50px 8px; }
.two li svg { width: 11px; height: 11px; margin-right: 7px; shape-rendering: crispEdges; }
.two li .ch { margin-right: 9px; shape-rendering: auto; }
.sel { display: flex; align-items: center; margin-left: -4px; padding: 0 2px 0 4px; background: #cce8ff; height: 16px; }
.tree .sel svg { margin-right: 6px; }
.sel span { background: #246fce; color: #000; padding: 0 2px 0 1px; }
.mark { position: absolute; left: -4px; top: 415px; width: 192px; height: 88px; }

.props { flex: 1; min-width: 0; display: flex; flex-direction: column; padding-bottom: 4px; }
.tabs { display: flex; flex: none; }
.tab { height: 21px; width: 64px; justify-content: center; background: #fff; border: 1px solid #dcdcdc; border-bottom: 0; font-family: "Noto Sans CJK SC", sans-serif; }
.tabs i { flex: 1; background: #fff; border-bottom: 1px solid #dcdcdc; }
.grid-wrap { flex: 1; min-height: 0; background: #fff; border: 1px solid #dcdcdc; border-top: 0; padding: 3px; display: flex; }
.grid-box { flex: 1; border: 1px solid #a0a0a0; }
table { border-collapse: collapse; table-layout: fixed; width: 369px; font: 12px/16px "Noto Sans Mono CJK SC", "Noto Sans CJK SC", monospace; }
.k0 { width: 21px; } .k1 { width: 191px; } .k2 { width: 126px; } .k3 { width: 31px; }
td, th { border: 1px solid #bdbdbd; padding: 0; height: 19px; font-weight: normal; white-space: nowrap; }
tbody th, thead th { background: linear-gradient(#fdfdfd, #ededed); }
thead th { height: 23px; }
thead .hot { background: linear-gradient(#f9d9a0, #f3c162); color: #5e0050; }
td:nth-child(2) { padding-left: 19px; }
td:nth-child(3) { padding-left: 2px; }
td:nth-child(4) { text-align: center; }
.b { color: #00f; } .g { color: #808080; }
.on td:nth-child(2) { background: #0078d7; color: #fff; }
.on td:nth-child(3) { background: #d9eaf9; }
.on th { background: #ffd290; color: #5e0050; }
td input { appearance: none; width: 13px; height: 13px; border: 1px solid #333; background: #fff; display: block; margin: 0 auto; }
.phi { width: 13px; height: 10px; display: inline-block; }
td.g { padding-left: 2px; }
.plus { width: 13px; height: 13px; border: 1px solid #b0b0b0; justify-content: center; margin-right: 4px; vertical-align: middle; }

.param { position: absolute; right: 22px; bottom: 7px; width: 269px; padding: 10px 8px 8px; border: 1px solid #444; background: linear-gradient(#bccbdd, #d7e4f2 30px); font-family: "Noto Sans CJK SC", sans-serif; }
.param h3 { color: #8c8c8c; margin-bottom: 5px; }
.cad { width: 100%; height: auto; background: #000; }
.bars { fill: none; stroke: #f00; stroke-width: 2; }
.cad-t { fill: #fff; font-size: 12px; }
.big { font-size: 20px; font-weight: 300; }

.status { height: 20px; flex: none; display: flex; gap: 2px; font: 12px/18px "Noto Sans Mono CJK SC", "Noto Sans CJK SC", monospace; white-space: nowrap; }
.status span { border: 1px solid #d7d7d7; padding-left: 1px; background: linear-gradient(#fff, #f1f1f1); }
.s1 { width: 148px; } .s2 { width: 78px; } .s3 { width: 98px; } .s4 { width: 48px; } .s5 { flex: 1; } .s6 { width: 70px; }

.task { height: 40px; flex: none; display: flex; background: #000b0e; color: #fff; }
.start { width: 48px; justify-content: center; background: #000; }
.cortana { width: 344px; display: flex; align-items: center; gap: 5px; padding: 0 14px 0 9px; background: #333; }
.cortana input { flex: 1; font-size: 14px; }
.cortana input::placeholder { color: #a0a0a0; opacity: 1; }
.apps { display: flex; align-items: center; }
.apps button { width: 44px; height: 40px; justify-content: center; position: relative; }
.apps .w52 { width: 52px; }
.over { position: absolute; width: 24px; height: 24px; }
.white { color: #eee; } .edge { color: #0a78d6; } .iex { color: #5fb7ef; }
.grip { width: 4px; height: 16px; border: 1px solid #444; border-width: 0 1px; margin: 0 9px 0 4px; flex: none; }
.apps .run { width: 36px; margin: 0 3px 0 4px; box-shadow: inset 0 -2px #76b9ed; }
.apps .act { width: 43px; margin: 0; background: #394246; }
.tray { margin-left: auto; display: flex; align-items: center; gap: 9px; white-space: nowrap; }
.tray .grip { margin: 0; }
.two-l { text-align: center; line-height: 17px; width: 58px; margin: 0 4px 0 3px; }
.clock { margin: 0 4px 0 12px; }
.zh { font-size: 14px; }
.note { position: relative; width: 28px; }
.note b { position: absolute; left: 8px; top: 5px; width: 15px; height: 15px; border-radius: 50%; background: #333; border: 1px solid #777; font-size: 10px; line-height: 13px; text-align: center; }
.desk { width: 5px; height: 40px; border-left: 1px solid #555; }

.ball { position: absolute; left: 1112px; top: -31px; width: 50px; height: 50px; }
.ball svg { width: 50px; height: 50px; }
.ball span { position: absolute; left: 0; right: 0; top: 30px; text-align: center; color: #fff; font-weight: bold; }
.ime { position: absolute; left: 752px; top: 24px; width: 202px; height: 24px; background: #fafcff; border: 1px solid #b5cbe4; display: flex; align-items: center; justify-content: flex-end; gap: 7px; padding-right: 3px; }
.ime b { font-size: 15px; color: #2175cb; }
.ime-s { position: absolute; left: -7px; top: -5px; width: 29px; height: 29px; }
```
